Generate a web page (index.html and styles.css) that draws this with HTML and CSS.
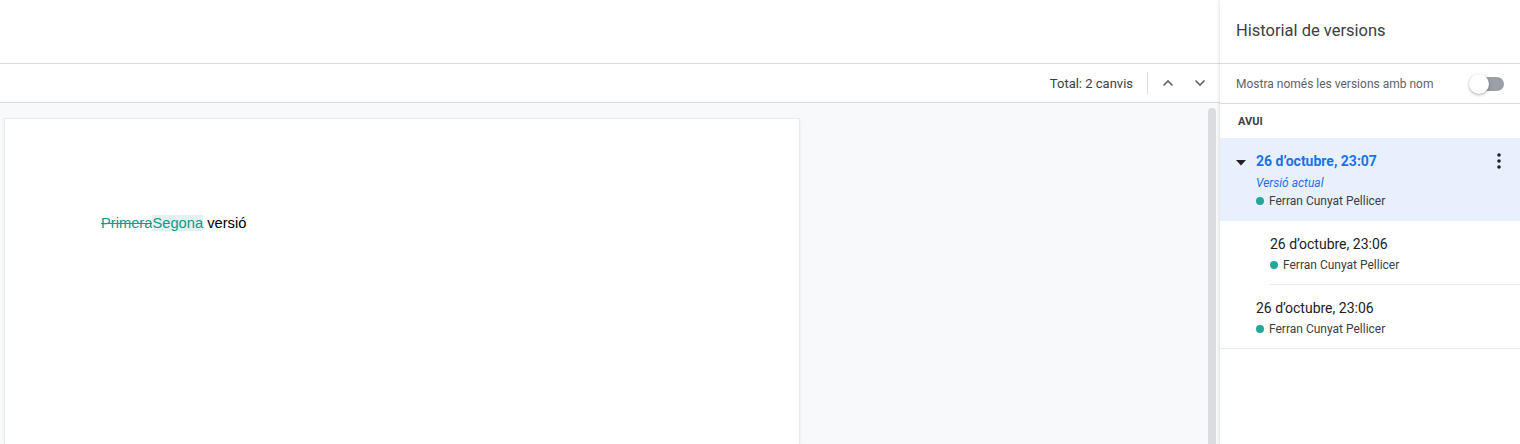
FILE: index.html
```html
<!DOCTYPE html>
<html lang="ca">
<head>
<meta charset="utf-8">
<title>Historial de versions</title>
<link rel="stylesheet" href="styles.css">
</head>
<body>
<div class="app">
  <div class="main">
    <div class="topbar"></div>
    <div class="toolbar">
      <span class="total">Total: 2 canvis</span>
      <span class="vsep"></span>
      <button class="navbtn" aria-label="Anterior">
        <svg width="12" height="8" viewBox="0 0 12 8"><path d="M1.5 6.5 L6 2 L10.5 6.5" fill="none" stroke="#5f6368" stroke-width="1.6"/></svg>
      </button>
      <button class="navbtn" aria-label="Següent">
        <svg width="12" height="8" viewBox="0 0 12 8"><path d="M1.5 1.5 L6 6 L10.5 1.5" fill="none" stroke="#5f6368" stroke-width="1.6"/></svg>
      </button>
    </div>
    <div class="canvas">
      <div class="pagearea">
        <div class="page">
          <p class="doctext"><span class="del">Primera</span><span class="ins">Segona</span> versió</p>
        </div>
      </div>
      <div class="scrolltrack"><div class="thumb"></div></div>
    </div>
  </div>
  <aside class="panel">
    <div class="panel-head">Historial de versions</div>
    <div class="filter">
      <span>Mostra només les versions amb nom</span>
      <span class="toggle"><span class="knob"></span></span>
    </div>
    <div class="group">AVUI</div>
    <div class="ver current">
      <svg class="caret" width="10" height="6" viewBox="0 0 10 6"><path d="M0 0 H10 L5 5.5 Z" fill="#202124"/></svg>
      <div class="ver-body">
        <div class="ver-title">26 d’octubre, 23:07</div>
        <div class="ver-note">Versió actual</div>
        <div class="ver-author"><span class="dot"></span>Ferran Cunyat Pellicer</div>
      </div>
      <svg class="more" width="4" height="16" viewBox="0 0 4 16"><circle cx="2" cy="2" r="1.8"/><circle cx="2" cy="8" r="1.8"/><circle cx="2" cy="14" r="1.8"/></svg>
    </div>
    <div class="ver sub">
      <div class="ver-body">
        <div class="ver-title">26 d’octubre, 23:06</div>
        <div class="ver-author"><span class="dot"></span>Ferran Cunyat Pellicer</div>
      </div>
    </div>
    <div class="ver last">
      <div class="ver-body">
        <div class="ver-title">26 d’octubre, 23:06</div>
        <div class="ver-author"><span class="dot"></span>Ferran Cunyat Pellicer</div>
      </div>
    </div>
  </aside>
</div>
</body>
</html>
```
FILE: styles.css
```css
* { box-sizing: border-box; }
html, body { margin: 0; padding: 0; height: 100%; overflow: hidden; }
body { font-family: Roboto, "Noto Sans", Arial, sans-serif; color: #3c4043; background: #fff; }

.app { display: flex; width: 1520px; height: 444px; }

.main { width: 1220px; display: flex; flex-direction: column; }
.topbar { height: 64px; border-bottom: 1px solid #dadce0; background: #fff; flex: none; }
.toolbar {
  height: 39px; flex: none; border-bottom: 1px solid #dadce0;
  display: flex; align-items: center; justify-content: flex-end;
  padding-right: 4px;
}
.total { font-size: 13px; color: #3c4043; margin-right: 14px; }
.vsep { width: 1px; height: 22px; background: #dadce0; margin-right: 4px; }
.navbtn {
  width: 32px; height: 32px; border: 0; background: none; padding: 0;
  display: flex; align-items: center; justify-content: center;
}

.canvas { flex: 1; display: flex; background: #f8f9fa; }
.pagearea { flex: 1; padding: 16px 0 0 5px; }
.page {
  width: 794px; height: 100%; background: #fff;
  box-shadow: 0 0 0 1px #e8eaed, 0 1px 3px rgba(60,64,67,.15);
  padding: 95px 0 0 96px;
}
.doctext { margin: 0; font-family: "Liberation Sans", Arial, sans-serif; font-size: 14.7px; color: #000; line-height: 18px; }
.del { color: #129a8d; text-decoration: line-through; }
.ins { color: #129a8d; background: #e0f2f1; }

.scrolltrack { width: 16px; padding: 5px 4px 0 4px; }
.thumb { width: 8px; height: 100%; background: #dadce0; border-radius: 4px 4px 0 0; }

.panel {
  width: 300px; flex: none; background: #fff;
  box-shadow: -1px 0 3px rgba(60,64,67,.14);
  position: relative;
}
.panel-head {
  height: 64px; border-bottom: 1px solid #dadce0;
  display: flex; align-items: center; padding: 0 0 2px 16px;
  font-size: 16.5px; color: #3c4043;
}
.filter {
  height: 40px; border-bottom: 1px solid #dadce0;
  display: flex; align-items: center; justify-content: space-between;
  padding: 0 16px 0 16px; font-size: 12px; color: #5f6368;
}
.toggle { position: relative; width: 34px; height: 14px; border-radius: 7px; background: #9aa0a6; }
.knob {
  position: absolute; left: -1px; top: -3px; width: 20px; height: 20px; border-radius: 50%;
  background: #fff; box-shadow: 0 1px 3px rgba(0,0,0,.35);
}
.group { height: 34px; padding: 11px 0 0 18px; font-size: 11px; font-weight: 700; color: #3c4043; }

.ver { display: flex; align-items: flex-start; }
.ver.current { background: #e8f0fe; height: 83px; padding: 15px 0 0 16px; }
.caret { margin-top: 7px; margin-right: 10px; flex: none; }
.ver-body { flex: 1; }
.ver-title { font-size: 14px; color: #202124; line-height: 16px; }
.current .ver-title { color: #1a73e8; font-weight: 700; }
.ver-note { font-size: 12px; font-style: italic; color: #1a73e8; margin-top: 7px; line-height: 14px; }
.ver-author { display: flex; align-items: center; font-size: 12px; color: #3c4043; margin-top: 4px; line-height: 14px; }
.ver-title + .ver-author { margin-top: 6px; }
.dot { width: 8px; height: 8px; border-radius: 50%; background: #26a69a; margin-right: 5px; flex: none; }
.more { fill: #202124; margin: 0 19px 0 0; flex: none; }

.ver.sub { height: 64px; margin-left: 50px; padding: 15px 0 0 0; border-bottom: 1px solid #e8eaed; }
.ver.last { height: 64px; padding: 15px 0 0 36px; border-bottom: 1px solid #e8eaed; }
```
